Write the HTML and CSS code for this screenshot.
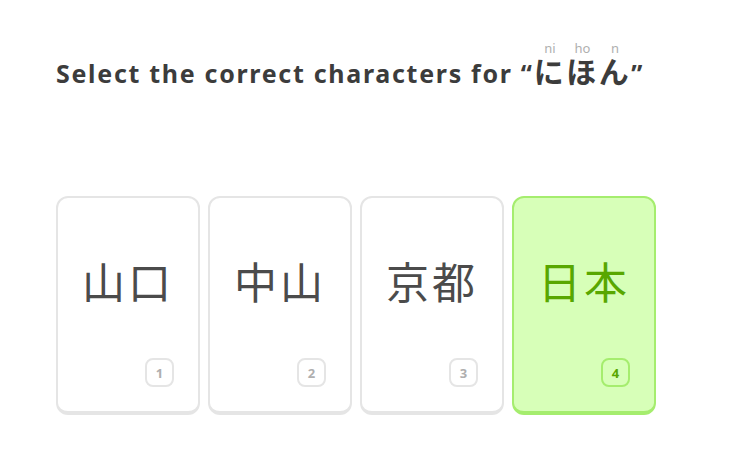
FILE: index.html
```html
<!DOCTYPE html>
<html lang="en">
<head>
<meta charset="utf-8">
<link rel="stylesheet" href="styles.css">
</head>
<body>
<main class="page">
  <h1 class="title">Select the correct characters for “<span class="jp"><ruby>に<rt>ni</rt></ruby><ruby>ほ<rt>ho</rt></ruby><ruby>ん<rt>n</rt></ruby></span>”</h1>
  <div class="choices">
    <div class="card"><div class="kanji">山口</div><span class="key">1</span></div>
    <div class="card"><div class="kanji">中山</div><span class="key">2</span></div>
    <div class="card"><div class="kanji">京都</div><span class="key">3</span></div>
    <div class="card selected"><div class="kanji">日本</div><span class="key">4</span></div>
  </div>
</main>
</body>
</html>
```
FILE: styles.css
```css
html, body {
  margin: 0;
  background: #ffffff;
}
.page {
  padding: 42px 56px 0;
  font-family: "Noto Sans", "Noto Sans CJK JP", sans-serif;
  color: #3c3c3c;
}
.title {
  margin: 0;
  font-size: 25px;
  font-weight: 700;
  line-height: 36px;
  letter-spacing: 1.7px;
  color: #3c3c3c;
  font-family: "Noto Sans", "Noto Sans CJK JP", sans-serif;
}
.title .jp {
  font-family: "Noto Sans CJK JP", sans-serif;
  font-size: 30px;
  font-weight: 700;
  letter-spacing: 2.5px;
}
.title ruby {
  ruby-position: over;
}
.title rt {
  font-size: 13px;
  font-weight: 400;
  color: #afafaf;
  line-height: 14px;
  letter-spacing: 0;
  font-family: "Noto Sans", sans-serif;
}
.choices {
  display: flex;
  gap: 8px;
  margin-top: 105px;
}
.card {
  box-sizing: border-box;
  width: 144px;
  height: 219px;
  border: 2px solid #e5e5e5;
  border-bottom-width: 4px;
  border-radius: 12px;
  background: #ffffff;
  display: flex;
  flex-direction: column;
  padding: 0 24px 24px;
}
.kanji {
  flex: 1;
  display: flex;
  align-items: center;
  justify-content: center;
  padding-top: 4px;
  font-family: "Noto Sans CJK JP", sans-serif;
  font-weight: 400;
  font-size: 43px;
  letter-spacing: 3px;
  color: #4b4b4b;
}
.key {
  align-self: flex-end;
  box-sizing: border-box;
  width: 29px;
  height: 29px;
  border: 2px solid #e5e5e5;
  border-radius: 8px;
  display: flex;
  align-items: center;
  justify-content: center;
  font-size: 13px;
  font-weight: 700;
  color: #afafaf;
}
.card.selected {
  background: #d7ffb8;
  border-color: #a5ed6e;
}
.card.selected .kanji {
  color: #58a700;
}
.card.selected .key {
  border-color: #a5ed6e;
  color: #58a700;
}
```
